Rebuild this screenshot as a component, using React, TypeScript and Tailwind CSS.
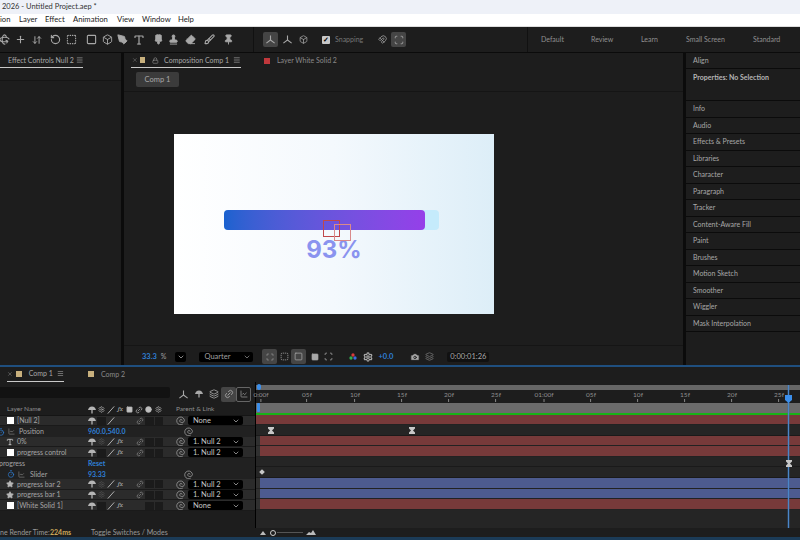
import type { ReactNode } from "react";
import clsx from "clsx";
import {
  ArrowDownUp, Box, Brush, Camera, ChartLine, ChevronDown, Circle, Eraser, Layers, Link2, Lock, Magnet,
  Menu, PaintbrushVertical, PenTool, Pin, Plus, Rotate3d, RotateCcw, Scan, Settings, Square, SquareDashed,
  Stamp, Star, Timer, Type, X,
} from "lucide-react";

const panels = [
  "Info", "Audio", "Effects & Presets", "Libraries", "Character", "Paragraph", "Tracker", "Content-Aware Fill",
  "Paint", "Brushes", "Motion Sketch", "Smoother", "Wiggler", "Mask Interpolation",
];

const rulerMarks = [
  ["0:00f", 5], ["05f", 51], ["10f", 99], ["15f", 146], ["20f", 193], ["25f", 240], ["01:00f", 288],
  ["05f", 335], ["10f", 382], ["15f", 429], ["20f", 476], ["25f", 523],
] as const;

type Row =
  | { type: "layer"; icon: "solid" | "text" | "star"; name: string; parent: string; fx?: boolean; mb?: boolean; sun?: boolean }
  | { type: "prop"; name: string; value: string; watch?: boolean; indent: number; link?: boolean };

const rows: Row[] = [
  { type: "layer", icon: "solid", name: "[Null 2]", parent: "None", mb: true },
  { type: "prop", name: "Position", value: "960.0,540.0", indent: 0, link: true },
  { type: "layer", icon: "text", name: "0%", parent: "1. Null 2", fx: true, mb: true, sun: true },
  { type: "layer", icon: "solid", name: "progress control", parent: "1. Null 2", fx: true, mb: true },
  { type: "prop", name: "progress", value: "Reset", indent: -1 },
  { type: "prop", name: "Slider", value: "93.33", indent: 11, watch: true, link: true },
  { type: "layer", icon: "star", name: "progress bar 2", parent: "1. Null 2", fx: true, mb: true, sun: true },
  { type: "layer", icon: "star", name: "progress bar 1", parent: "1. Null 2", mb: true, sun: true },
  { type: "layer", icon: "solid", name: "[White Solid 1]", parent: "None", fx: true },
];

function Tool({ children, active, className }: { children: ReactNode; active?: boolean; className?: string }) {
  return (
    <div className={clsx("flex h-[15px] w-[15px] shrink-0 items-center justify-center rounded-[2px] text-[#a8a8a8]", active && "bg-[#454545]", className)}>
      {children}
    </div>
  );
}

function Axis() {
  return (
    <svg width="11" height="11" viewBox="0 0 12 12" fill="none" stroke="currentColor" strokeWidth="1.2">
      <path d="M6 1.5V6.5L1.5 10M6 6.5L10.5 10" />
    </svg>
  );
}

function Shy() {
  return (
    <svg width="8" height="8" viewBox="0 0 10 10" fill="currentColor">
      <path d="M5 .5C7.8.5 9.5 2.5 10 5H0C.5 2.5 2.2.5 5 .5ZM4.2 5H5.8V9.5H4.2Z" />
    </svg>
  );
}

function Slash() {
  return (
    <svg width="8" height="8" viewBox="0 0 10 10" stroke="currentColor" strokeWidth="1.2">
      <path d="M1 9.5 9 .5" />
    </svg>
  );
}

function Spiral({ className }: { className?: string }) {
  return (
    <svg className={className} width="9" height="9" viewBox="0 0 10 10" fill="none" stroke="#9a9a9a" strokeWidth="0.9">
      <path d="M7.5 9A4.3 4.3 0 1 1 9.4 5.2C9.2 7 6.6 7.8 5 6.9 3.6 6 4 4 5.4 3.8 6.4 3.7 7 4.5 6.6 5.2" />
    </svg>
  );
}

function Cell({ children }: { children?: ReactNode }) {
  return <div className="flex h-[9px] w-[9.5px] shrink-0 items-center justify-center text-[#b5b5b5]">{children}</div>;
}

function DarkCell() {
  return <div className="mx-[0.5px] h-[8px] w-[8.5px] shrink-0 bg-[#1b1b1b]" />;
}

function LayerIcon({ icon }: { icon: "solid" | "text" | "star" }) {
  if (icon === "solid") return <div className="h-[7px] w-[7px] bg-white" />;
  if (icon === "text") return <Type size={8} strokeWidth={2.5} className="text-[#c9c9c9]" />;
  return <Star size={8} fill="#b8b8b8" className="text-[#b8b8b8]" />;
}

function LayerRow({ row }: { row: Row }) {
  if (row.type === "prop") {
    return (
      <div className="flex h-[10.6px] shrink-0 items-center bg-[#212121] pt-[1px] text-[7px] text-[#a5a5a5]">
        <div className="relative flex w-[88px] shrink-0 items-center">
          {row.indent >= 0 && (
            <>
              <Timer size={8} className={clsx("absolute text-[#2f7fd6]", row.indent === 0 ? "-left-[3px]" : "left-[7px]")} />
              <ChartLine size={7} className={clsx("absolute text-[#8a8a8a]", row.indent === 0 ? "left-[8px]" : "left-[18px]")} />
            </>
          )}
          <span className={clsx(row.indent === -1 && "-ml-[1px]", row.indent === 0 && "ml-[19px]", row.indent === 11 && "ml-[30px]")}>{row.name}</span>
        </div>
        <span className="font-bold text-[#2f7fd6]">{row.value}</span>
        {row.link && <Spiral className="absolute left-[184px]" />}
      </div>
    );
  }
  return (
    <div className="flex h-[10.6px] shrink-0 items-center border-b border-[#1a1a1a] bg-[#2b2b2b] pt-[1px] text-[7px] text-[#a5a5a5]">
      <div className="flex w-[17px] shrink-0 items-center justify-end pr-[3px]">
        <LayerIcon icon={row.icon} />
      </div>
      <span className="w-[70px] shrink-0 whitespace-nowrap">{row.name}</span>
      <Cell><Shy /></Cell>
      {row.sun ? <Cell><Settings size={7} className="text-[#555]" /></Cell> : <DarkCell />}
      <Cell><Slash /></Cell>
      <Cell>{row.fx && <span className="font-serif text-[7px] italic">fx</span>}</Cell>
      <div className="w-[10px] shrink-0" />
      <Cell>{row.mb && <Link2 size={8} className="-rotate-45 text-[#8a8a8a]" />}</Cell>
      <DarkCell />
      <DarkCell />
      <div className="w-[12px] shrink-0" />
      <Spiral />
      <div className="ml-[3.5px] flex h-[9px] w-[55px] items-center justify-between rounded-[2px] bg-black pr-[3px] pl-[5px] text-[7.5px] text-[#c5c5c5]">
        {row.parent}
        <ChevronDown size={8} />
      </div>
    </div>
  );
}

function TrackRow({ kind, children }: { kind: "red" | "blue" | "plain" | "first"; children?: ReactNode }) {
  const barColor = kind === "blue" ? "bg-[#4d5b8f]" : "bg-[#773a3a]";
  if (kind === "plain") {
    return <div className="relative h-[10.6px] border-b border-[#1a1a1a] bg-[#252525]">{children}</div>;
  }
  return (
    <div className="flex h-[10.6px] border-b border-[#222] bg-[#303030]">
      <div className={kind === "first" ? "w-0" : "w-[4px]"} />
      <div className={clsx("flex-1", barColor)} />
    </div>
  );
}

function Keyframe({ left, top }: { left: number; top: number }) {
  return (
    <svg className="absolute" style={{ left, top }} width="6" height="7" viewBox="0 0 6 7" fill="#c8c8c8">
      <path d="M0 0H6V1.5L4 3.5L6 5.5V7H0V5.5L2 3.5L0 1.5Z" />
    </svg>
  );
}

export default function App() {
  return (
    <div className="flex h-[540px] w-[800px] flex-col overflow-hidden bg-[#0b0b0b] font-['Lato','Open_Sans',sans-serif] text-[7px] leading-none">
      <div className="flex h-[14px] shrink-0 items-center bg-[#eef1f8] pl-[2px] text-[7.5px] text-[#333]">2026 - Untitled Project.aep *</div>
      <div className="flex h-[13px] shrink-0 items-center border-b border-[#ddd] bg-white text-[7.7px] text-[#222]">
        <span className="w-[19px]">ion</span>
        <span className="w-[26px]">Layer</span>
        <span className="w-[28px]">Effect</span>
        <span className="w-[44px]">Animation</span>
        <span className="w-[25px]">View</span>
        <span className="w-[36px]">Window</span>
        <span>Help</span>
      </div>

      <div className="flex h-[25px] shrink-0 items-center bg-[#1d1d1d]">
        <div className="-ml-[3px] flex w-[256px] shrink-0 items-center">
          <Tool><Rotate3d size={11} strokeWidth={2.4} /></Tool>
          <Tool className="ml-[1px]"><Plus size={11} strokeWidth={2.4} /></Tool>
          <Tool className="ml-[1px]"><ArrowDownUp size={10} strokeWidth={2.4} /></Tool>
          <Tool className="ml-[4px]"><RotateCcw size={11} strokeWidth={2.4} /></Tool>
          <Tool className="ml-[1px]"><SquareDashed size={11} strokeWidth={2.4} /></Tool>
          <Tool className="ml-[5px]"><Square size={11} strokeWidth={2.4} /></Tool>
          <Tool className="ml-[1px]"><Box size={11} strokeWidth={2} /></Tool>
          <Tool><PenTool size={11} fill="#a8a8a8" /></Tool>
          <Tool className="ml-[1px]"><Type size={12} strokeWidth={2.4} /></Tool>
          <Tool className="ml-[5px]"><PaintbrushVertical size={11} fill="#a8a8a8" /></Tool>
          <Tool><Stamp size={11} fill="#a8a8a8" /></Tool>
          <Tool className="ml-[2px]"><Eraser size={11} fill="#a8a8a8" /></Tool>
          <Tool className="ml-[4px]"><Brush size={11} strokeWidth={2.4} /></Tool>
          <Tool className="ml-[4px]"><Pin size={11} fill="#a8a8a8" /></Tool>
        </div>
        <div className="h-[25px] w-px bg-[#111]" />
        <Tool active className="ml-[9px] text-[#8a8a8a]"><Axis /></Tool>
        <Tool className="ml-[2px] text-[#707070]"><Axis /></Tool>
        <Tool className="ml-[1px] text-[#606060]"><Box size={9} /></Tool>
        <div className="ml-[11px] flex h-[8px] w-[8px] items-center justify-center rounded-[1px] bg-[#c8c8c8] text-[7px] font-bold text-black">✓</div>
        <span className="ml-[5px] w-[37px] text-[#777]">Snapping</span>
        <Tool className="ml-[3px] text-[#777]"><Magnet size={9} /></Tool>
        <Tool active className="ml-[1px]"><Scan size={10} /></Tool>
        <div className="ml-[121px] h-[25px] w-px bg-[#111]" />
        <div className="relative flex-1 text-[#909090]">
          <div className="flex items-center">
            <span className="ml-[13px] w-[50px]">Default</span>
            <span className="w-[50px]">Review</span>
            <span className="w-[45px]">Learn</span>
            <span className="w-[67px]">Small Screen</span>
            <span>Standard</span>
          </div>
        </div>
      </div>

      <div className="mt-[1px] flex h-[312px] shrink-0 gap-[3px]">
        <div className="w-[121px] shrink-0 bg-[#1d1d1d]">
          <div className="flex h-[15px] w-[83px] items-center border-b border-[#c9c9c9] text-[#a8a8a8]">
            <span className="ml-[8px] w-[73px] whitespace-nowrap">Effect Controls Null 2</span>
            <Menu size={8} />
          </div>
          <div className="mt-[12px] h-px bg-[#151515]" />
        </div>

        <div className="flex w-[559px] shrink-0 flex-col bg-[#1d1d1d]">
          <div className="flex h-[15px] shrink-0 items-center text-[#a8a8a8]">
            <div className="ml-[7px] flex h-[15px] w-[110px] items-center border-b border-[#c9c9c9]">
              <X size={6} className="ml-[1px] text-[#888]" />
              <div className="ml-[2px] h-[6px] w-[6px] bg-[#c8b07d]" />
              <Lock size={7} className="ml-[7px] text-[#999]" />
              <span className="ml-[5px] w-[73px] whitespace-nowrap">Composition Comp 1</span>
              <Menu size={8} />
            </div>
            <div className="ml-[23px] h-[6px] w-[6px] bg-[#c0383c]" />
            <span className="ml-[7px] text-[#8a8a8a]">Layer White Solid 2</span>
          </div>
          <div className="flex h-[24px] shrink-0 items-center border-b border-[#151515] pl-[12px]">
            <div className="flex h-[15px] w-[43px] items-center justify-center rounded-[2px] bg-[#3b3b3b] text-[7.5px] text-[#a8a8a8]">Comp 1</div>
          </div>
          <div className="flex h-[253px] shrink-0 items-start pt-[42px] pl-[50px]">
            <div className="relative flex h-[180px] w-[320px] flex-col items-center bg-gradient-to-r from-white via-[#f4f9fd] to-[#ddeef8]">
              <div className="mt-[76px] ml-[50px] flex h-[20px] w-[215px] self-start rounded-[4px] bg-[#c5ebfc]">
                <div className="h-[20px] w-[201px] rounded-[4px] bg-gradient-to-r from-[#1a62cf] to-[#953fe9]" />
              </div>
              <span className="mt-[5px] font-['Inter',sans-serif] text-[24px] leading-[30px] font-bold text-[#8a93ef]">93%</span>
              <div className="absolute top-[86px] left-[149px] h-[17px] w-[17px] border border-[#c0484a]" />
              <div className="absolute top-[90px] left-[160px] h-[17px] w-[17px] border border-[#d98a8a]" />
            </div>
          </div>
          <div className="flex h-[20px] shrink-0 items-center border-t border-[#151515] pt-[2px] text-[#a0a0a0]">
            <span className="ml-[18px] text-[7.5px] font-bold text-[#2f7fd6]">33.3</span>
            <span className="ml-[4px]">%</span>
            <div className="ml-[9px] flex h-[10px] w-[11px] items-center justify-center rounded-[2px] bg-black"><ChevronDown size={8} className="text-[#ccc]" /></div>
            <div className="ml-[13px] flex h-[10px] w-[54px] items-center justify-between rounded-[2px] bg-black pr-[2px] pl-[5px] text-[7.5px]">
              Quarter <ChevronDown size={8} />
            </div>
            <Tool active className="ml-[9px]"><Scan size={8} /></Tool>
            <Tool><SquareDashed size={9} /></Tool>
            <Tool active className="-ml-[1px]"><Square size={9} /></Tool>
            <Tool className="ml-[1px]"><Square size={8} fill="#a8a8a8" /></Tool>
            <Tool className="-ml-[1px]"><Scan size={9} /></Tool>
            <div className="relative ml-[13px] h-[8px] w-[8px]">
              <Circle size={4} fill="#3d6ce0" stroke="none" className="absolute top-[3px] left-[4px]" />
              <Circle size={4} fill="#2fae4e" stroke="none" className="absolute top-[3px] left-0" />
              <Circle size={4} fill="#d83a3a" stroke="none" className="absolute top-0 left-[2px]" />
            </div>
            <Tool className="ml-[3px]"><Settings size={10} strokeWidth={3} /></Tool>
            <span className="ml-[3px] text-[7.5px] font-bold text-[#2f7fd6]">+0.0</span>
            <Tool className="ml-[14px]"><Camera size={10} fill="#a8a8a8" className="text-[#1d1d1d]" /></Tool>
            <Tool><Layers size={9} className="text-[#777]" /></Tool>
            <div className="ml-[10px] flex h-[10px] w-[42px] items-center justify-center rounded-[2px] bg-[#111] text-[7.5px] text-[#a8a8a8]">0:00:01:26</div>
          </div>
        </div>

        <div className="flex flex-1 flex-col text-[#a8a8a8]">
          <div className="flex h-[15px] shrink-0 items-center bg-[#1d1d1d] pl-[7px]">Align</div>
          <div className="mt-[1px] h-[31px] shrink-0 bg-[#1d1d1d] pt-[5px] pl-[7px] font-bold text-[#b5b5b5]">Properties: No Selection</div>
          {panels.map(name => (
            <div key={name} className="mt-[1px] flex h-[15.5px] shrink-0 items-center bg-[#1d1d1d] pl-[7px]">{name}</div>
          ))}
          <div className="mt-[1px] flex-1 bg-[#1d1d1d]" />
        </div>
      </div>

      <div className="h-[1.5px] shrink-0 bg-[#1f4f7f]" />

      <div className="relative flex min-h-0 flex-1 flex-col bg-[#1d1d1d]">
        <div className="flex h-[15px] shrink-0 items-center text-[#a8a8a8]">
          <div className="ml-[7px] flex h-[15px] w-[57px] items-center border-b border-[#c9c9c9]">
            <X size={6} className="text-[#888]" />
            <div className="ml-[3px] h-[6px] w-[6px] bg-[#c8b07d]" />
            <span className="ml-[7px] w-[29px]">Comp 1</span>
            <Menu size={7} />
          </div>
          <div className="ml-[24px] h-[6px] w-[6px] bg-[#c8b07d]" />
          <span className="ml-[7px] text-[#8a8a8a]">Comp 2</span>
        </div>

        <div className="flex min-h-0 flex-1">
          <div className="relative flex w-[255px] shrink-0 flex-col">
            <div className="flex h-[21px] shrink-0 items-start pt-[5px]">
              <div className="h-[11px] w-[170px] rounded-r-[2px] bg-[#121212]" />
              <div className="ml-[6px] flex items-center">
                <Tool><Axis /></Tool>
                <Tool><Shy /></Tool>
                <Tool><Layers size={10} /></Tool>
                <Tool active><Link2 size={10} className="-rotate-45" /></Tool>
                <Tool className="border border-[#666]"><ChartLine size={8} /></Tool>
              </div>
            </div>
            <div className="flex h-[13px] shrink-0 items-center border-b border-[#151515] pt-[2px] text-[6.5px] text-[#8f8f8f]">
              <span className="ml-[7px] w-[80px]">Layer Name</span>
              <Cell><Shy /></Cell>
              <Cell><Settings size={7} /></Cell>
              <Cell><Slash /></Cell>
              <Cell><span className="font-serif text-[7px] italic">fx</span></Cell>
              <Cell><Square size={7} fill="#c0c0c0" /></Cell>
              <Cell><Link2 size={8} className="-rotate-45" /></Cell>
              <Cell><Circle size={7} fill="#c0c0c0" /></Cell>
              <Cell><Settings size={7} /></Cell>
              <span className="ml-[13px]">Parent &amp; Link</span>
            </div>
            {rows.map((row, i) => (
              <LayerRow key={i} row={row} />
            ))}
          </div>

          <div className="w-px shrink-0 bg-black" />

          <div className="relative flex-1 bg-[#252525]">
            <div className="relative h-[21px] bg-[#1d1d1d]">
              <div className="absolute top-[3px] right-0 left-0 h-[5px] bg-[#666]" />
              <div className="absolute top-[2.5px] left-[1px] h-[6px] w-[4px] rounded-[2px] bg-[#3b8eea]" />
              {rulerMarks.map(([label, x], i) => (
                <div key={i} className="absolute top-[10px] flex -translate-x-1/2 flex-col items-center text-[6.5px] text-[#909090]" style={{ left: x }}>
                  {label}
                  <div className="mt-[1px] h-[3px] w-px bg-[#888]" />
                </div>
              ))}
            </div>
            <div className="relative h-[10px] bg-[#6b6b6b]">
              <div className="absolute top-0 left-[1px] h-[9px] w-[3px] rounded-[1px] bg-[#3b8eea]" />
            </div>
            <div className="h-[2px] bg-[#17b317]" />
            <TrackRow kind="first" />
            <TrackRow kind="plain">
              <Keyframe left={12} top={2} />
              <Keyframe left={153} top={2} />
            </TrackRow>
            <TrackRow kind="red" />
            <TrackRow kind="red" />
            <TrackRow kind="plain" />
            <TrackRow kind="plain">
              <div className="absolute top-[3px] left-[4px] h-[4px] w-[4px] rotate-45 bg-[#c8c8c8]" />
            </TrackRow>
            <TrackRow kind="blue" />
            <TrackRow kind="blue" />
            <TrackRow kind="red" />

            <div className="absolute top-[3px] bottom-0 left-[531px] w-[3px] bg-[#3b6ea8]/30" />
            <div className="absolute top-[3px] bottom-0 left-[532px] w-px bg-[#4a86c8]" />
            <svg className="absolute top-[13px] left-[529px]" width="7" height="8" viewBox="0 0 7 8" fill="#3b8eea">
              <path d="M0 0H7V5L3.5 8L0 5Z" />
            </svg>
            <Keyframe left={530} top={78} />
          </div>
        </div>

        <div className="flex h-[9px] shrink-0 items-center bg-[#1d1d1d] text-[#999]">
          <span className="w-[50px] whitespace-nowrap">ne Render Time:</span>
          <span className="w-[41px] font-bold text-[#c9a65a]">224ms</span>
          <span className="w-[167px]">Toggle Switches / Modes</span>
          <svg width="6" height="4" viewBox="0 0 6 4" fill="#bbb" className="ml-[2px]"><path d="M3 0 6 4H0Z" /></svg>
          <div className="ml-[4px] h-[6px] w-[6px] rounded-full border border-[#ccc]" />
          <div className="ml-[1px] h-px w-[26px] bg-[#555]" />
          <svg width="10" height="5" viewBox="0 0 10 5" fill="#bbb" className="ml-[3px]"><path d="M0 5 3 2 5 3 7 0 10 5Z" /></svg>
        </div>
        <div className="h-[3px] shrink-0 bg-[#1b3b57]" />
      </div>
    </div>
  );
}
